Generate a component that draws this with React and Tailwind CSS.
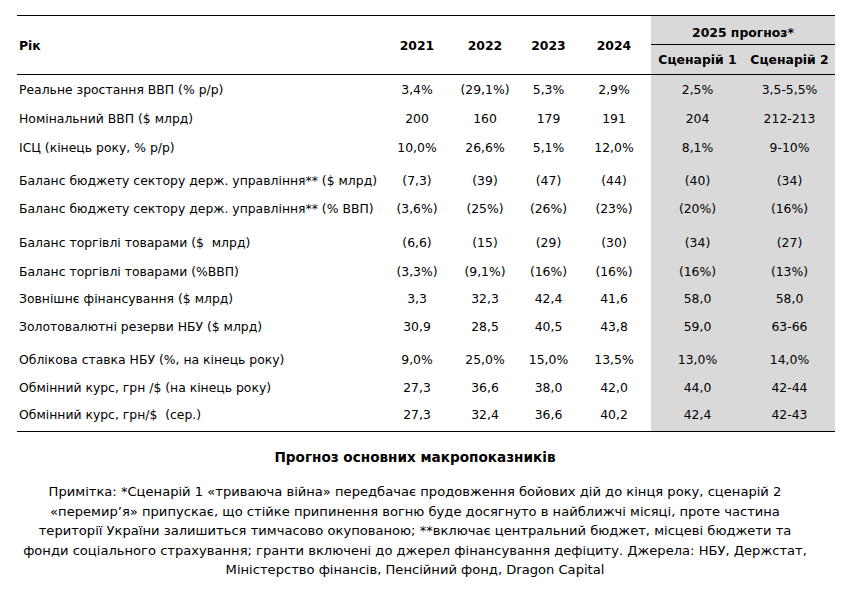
import React from 'react';

const rows = [
    { label: 'Реальне зростання ВВП (% р/р)', v: ['3,4%', '(29,1%)', '5,3%', '2,9%', '2,5%', '3,5-5,5%'], h: 'h-[29px]' },
    { label: 'Номінальний ВВП ($ млрд)', v: ['200', '160', '179', '191', '204', '212-213'], h: 'h-[29px]' },
    { label: 'ІСЦ (кінець року, % р/р)', v: ['10,0%', '26,6%', '5,1%', '12,0%', '8,1%', '9-10%'], h: 'h-[33px]' },
    { label: 'Баланс бюджету сектору держ. управління** ($ млрд)', v: ['(7,3)', '(39)', '(47)', '(44)', '(40)', '(34)'], h: 'h-[28px]' },
    { label: 'Баланс бюджету сектору держ. управління** (% ВВП)', v: ['(3,6%)', '(25%)', '(26%)', '(23%)', '(20%)', '(16%)'], h: 'h-[34px]' },
    { label: 'Баланс торгівлі товарами ($  млрд)', v: ['(6,6)', '(15)', '(29)', '(30)', '(34)', '(27)'], h: 'h-[29px]' },
    { label: 'Баланс торгівлі товарами (%ВВП)', v: ['(3,3%)', '(9,1%)', '(16%)', '(16%)', '(16%)', '(13%)'], h: 'h-[27px]' },
    { label: 'Зовнішнє фінансування ($ млрд)', v: ['3,3', '32,3', '42,4', '41,6', '58,0', '58,0'], h: 'h-[28px]' },
    { label: 'Золотовалютні резерви НБУ ($ млрд)', v: ['30,9', '28,5', '40,5', '43,8', '59,0', '63-66'], h: 'h-[33px]' },
    { label: 'Облікова ставка НБУ (%, на кінець року)', v: ['9,0%', '25,0%', '15,0%', '13,5%', '13,0%', '14,0%'], h: 'h-[28px]' },
    { label: 'Обмінний курс, грн /$ (на кінець року)', v: ['27,3', '36,6', '38,0', '42,0', '44,0', '42-44'], h: 'h-[27px]' },
    { label: 'Обмінний курс, грн/$  (сер.)', v: ['27,3', '32,4', '36,6', '40,2', '42,4', '42-43'], h: 'h-[31px]' },
];

const cols = 'grid grid-cols-[367px_66px_70px_57px_74px_93px_91px]';

export default function App() {
    return (
        <div className="w-[851px] h-[590px] bg-white text-black font-['DejaVu_Sans',sans-serif] text-[12.4px] leading-[16px] pt-[15px]">
            <div className="ml-[17px] w-[818px] border-t border-black">
                {/* header */}
                <div className={`${cols} h-[59px] border-b border-black font-bold`}>
                    <div className="pl-[2px] pt-[22px]">Рік</div>
                    <div className="text-center pt-[22px]">2021</div>
                    <div className="text-center pt-[22px]">2022</div>
                    <div className="text-center pt-[22px]">2023</div>
                    <div className="text-center pt-[22px]">2024</div>
                    <div className="col-span-2 bg-[#d9d9d9] flex flex-col">
                        <div className="h-[29px] border-b border-black text-center pt-[9px]">2025 прогноз*</div>
                        <div className="grid grid-cols-[93px_91px] pt-[7px]">
                            <div className="text-center">Сценарій 1</div>
                            <div className="text-center">Сценарій 2</div>
                        </div>
                    </div>
                </div>

                {rows.map((r) => (
                    <div key={r.label} className={`${cols} ${r.h}`}>
                        <div className="pl-[2px] pt-[7px] whitespace-pre">{r.label}</div>
                        {r.v.map((x, i) => (
                            <div key={i} className={`text-center pt-[7px] whitespace-pre ${i > 3 ? 'bg-[#d9d9d9]' : ''}`}>{x}</div>
                        ))}
                    </div>
                ))}
                <div className="border-t border-black" />
            </div>

            <div className="w-[830px] text-center mt-[16px]">
                <div className="font-bold text-[13.6px] leading-[18px]">Прогноз основних макропоказників</div>
                <p className="mt-[16px] text-[13.1px] leading-[19.6px]">
                    Примітка: *Сценарій 1 «триваюча війна» передбачає продовження бойових дій до кінця року, сценарій 2<br />
                    «перемир’я» припускає, що стійке припинення вогню буде досягнуто в найближчі місяці, проте частина<br />
                    території України залишиться тимчасово окупованою; **включає центральний бюджет, місцеві бюджети та<br />
                    фонди соціального страхування; гранти включені до джерел фінансування дефіциту. Джерела: НБУ, Держстат,<br />
                    Міністерство фінансів, Пенсійний фонд, Dragon Capital
                </p>
            </div>
        </div>
    );
}
